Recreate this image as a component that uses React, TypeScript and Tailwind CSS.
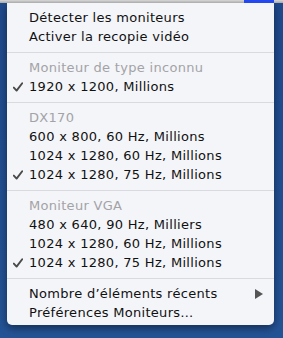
import React from 'react';

type Entry =
  | { kind: 'item'; label: string; checked?: boolean; submenu?: boolean }
  | { kind: 'header'; label: string }
  | { kind: 'sep' };

const entries: Entry[] = [
  { kind: 'item', label: 'Détecter les moniteurs' },
  { kind: 'item', label: 'Activer la recopie vidéo' },
  { kind: 'sep' },
  { kind: 'header', label: 'Moniteur de type inconnu' },
  { kind: 'item', label: '1920 x 1200, Millions', checked: true },
  { kind: 'sep' },
  { kind: 'header', label: 'DX170' },
  { kind: 'item', label: '600 x 800, 60 Hz, Millions' },
  { kind: 'item', label: '1024 x 1280, 60 Hz, Millions' },
  { kind: 'item', label: '1024 x 1280, 75 Hz, Millions', checked: true },
  { kind: 'sep' },
  { kind: 'header', label: 'Moniteur VGA' },
  { kind: 'item', label: '480 x 640, 90 Hz, Milliers' },
  { kind: 'item', label: '1024 x 1280, 60 Hz, Millions' },
  { kind: 'item', label: '1024 x 1280, 75 Hz, Millions', checked: true },
  { kind: 'sep' },
  { kind: 'item', label: 'Nombre d’éléments récents', submenu: true },
  { kind: 'item', label: 'Préférences Moniteurs…' },
];

const Check = () => (
  <svg width="10" height="10" viewBox="0 0 10 10" className="text-[#4a4a4a]">
    <path d="M0.8 5.6 L3.6 8.6 L9.2 1.2" fill="none" stroke="currentColor" strokeWidth="1.9" strokeLinecap="round" strokeLinejoin="round" />
  </svg>
);

const Arrow = () => (
  <svg width="8" height="10" viewBox="0 0 8 10" className="text-[#555]">
    <polygon points="0,0 8,5 0,10" fill="currentColor" />
  </svg>
);

const App = () => {
  return (
    <div
      className="w-[283px] h-[338px] overflow-hidden bg-gradient-to-b from-[#1f4a8c] to-[#245395]"
      style={{ fontFamily: '"DejaVu Sans", "Liberation Sans", sans-serif' }}
    >
      {/* menu bar strip */}
      <div className="flex h-[3px]">
        <div className="flex-1 bg-gradient-to-b from-[#d8d8d8] to-[#a9a9a9]" />
        <div className="w-[30px] bg-[#2348f0]" />
        <div className="w-[9px] bg-gradient-to-b from-[#d8d8d8] to-[#a9a9a9]" />
      </div>

      {/* dropdown menu */}
      <div className="ml-[7px] w-[267px] bg-[#f4f5f9] rounded-b-[5px] pt-[5px] pb-[3px] shadow-[0_3px_9px_rgba(0,0,0,0.45)]">
        {entries.map((e, i) => {
          if (e.kind === 'sep') {
            return (
              <div key={i} className="h-[12px] flex items-center">
                <div className="w-full h-px bg-[#d9dadf]" />
              </div>
            );
          }
          return (
            <div
              key={i}
              className={`h-[19px] flex items-center text-[13px] leading-[19px] tracking-[0.3px] ${e.kind === 'header' ? 'text-[#a3a3a6]' : 'text-[#111]'}`}
            >
              <div className="w-[22px] flex justify-end pr-[6px]">
                {e.kind === 'item' && e.checked && <Check />}
              </div>
              <span className="flex-1 whitespace-nowrap">{e.label}</span>
              {e.kind === 'item' && e.submenu && (
                <div className="pr-[11px] flex items-center">
                  <Arrow />
                </div>
              )}
            </div>
          );
        })}
      </div>
    </div>
  );
};

export default App;
